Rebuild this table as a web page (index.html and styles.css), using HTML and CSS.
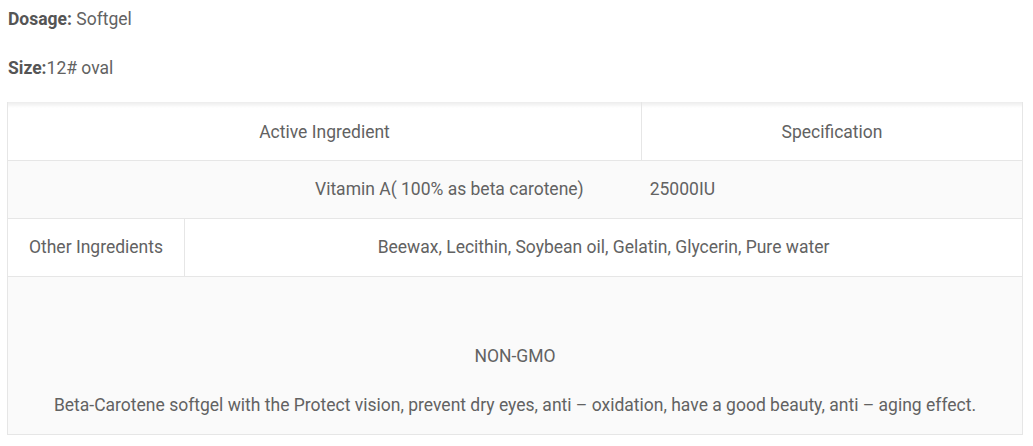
FILE: index.html
```html
<!DOCTYPE html>
<html lang="en">
	<head>
		<meta charset="UTF-8" />
		<meta name="viewport" content="width=device-width, initial-scale=1.0" />
		<title>Beta-Carotene Softgel</title>
		<link rel="stylesheet" href="styles.css">
	</head>
	<body>
		<div class="product">
			<p class="spec"><strong>Dosage:</strong> Softgel</p>
			<p class="spec"><strong>Size:</strong>12# oval</p>

			<table class="ingredients">
				<colgroup>
					<col class="col-a">
					<col class="col-b">
					<col class="col-c">
				</colgroup>
				<tr class="head">
					<td colspan="2">Active Ingredient</td>
					<td>Specification</td>
				</tr>
				<tr class="stripe">
					<td colspan="3">Vitamin A( 100% as beta carotene)<span class="amount">25000IU</span></td>
				</tr>
				<tr>
					<td>Other Ingredients</td>
					<td colspan="2">Beewax, Lecithin, Soybean oil, Gelatin, Glycerin, Pure water</td>
				</tr>
				<tr class="stripe">
					<td colspan="3" class="notes">
						<p>&nbsp;</p>
						<p>NON-GMO</p>
						<p>Beta-Carotene softgel with the Protect vision, prevent dry eyes, anti – oxidation, have a good beauty, anti – aging effect.</p>
					</td>
				</tr>
			</table>
		</div>
	</body>
</html>
```

FILE: styles.css
```css
body {
	margin: 0;
	background-color: #fff;
	font-family: Roboto, "Liberation Sans", sans-serif;
	font-size: 17.5px;
	line-height: 26px;
	color: #626262;
}
.product {
	padding: 6px 10px 0 7px;
}
.spec {
	margin: 0 0 23px;
	padding-left: 1px;
}
.spec strong {
	color: #555;
}
.ingredients {
	width: 100%;
	margin-top: -2px;
	border-collapse: collapse;
	table-layout: fixed;
}
.col-a {
	width: 177px;
}
.col-b {
	width: 457px;
}
.ingredients td {
	height: 26px;
	padding: 15px 10px 16px;
	border: 1px solid #e6e6e6;
	text-align: center;
	vertical-align: middle;
}
/* soft shadow along the top edge */
.ingredients tr.head td {
	border-top: none;
	padding: 17px 10px 15px;
	background: linear-gradient(#ececec, #fff 6px);
}
.ingredients tr.stripe td {
	background-color: #fafafa;
}
.amount {
	margin-left: 66px;
}
.notes p {
	margin: 25px 0 0;
}
.notes p:first-child {
	margin-top: 0;
}
.notes p:last-child {
	margin-top: 23px;
}
```
